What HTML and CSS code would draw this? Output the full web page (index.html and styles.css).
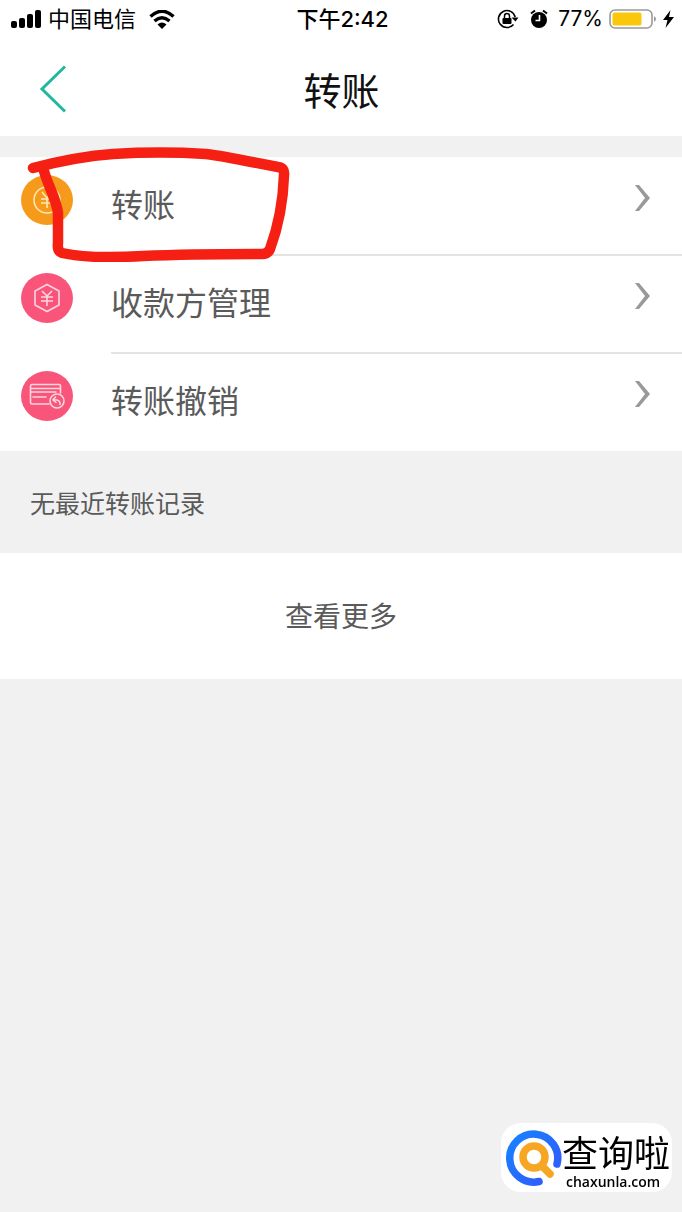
FILE: index.html
```html
<!DOCTYPE html>
<html lang="zh-CN">
<head>
  <meta charset="UTF-8" />
  <meta name="viewport" content="width=device-width, initial-scale=1.0" />
  <title>转账</title>
  <link rel="stylesheet" href="styles.css">
</head>
<body>

  <!-- 状态栏 -->
  <div class="status-bar">
    <div class="status-left">
      <svg width="31" height="19" viewBox="0 0 31 19">
        <rect x="0" y="11" width="6" height="7" rx="2" />
        <rect x="8" y="8" width="6" height="10" rx="2" />
        <rect x="16" y="4" width="6" height="14" rx="2" />
        <rect x="24" y="0" width="6" height="18" rx="2" />
      </svg>
      <span class="carrier">中国电信</span>
      <svg class="wifi" width="26" height="19" viewBox="0 0 26 19">
        <path d="M1.500 6.500Q13-4 24.500 6.500M5.500 11Q13 4.500 20.500 11" fill="none" stroke="#000" stroke-width="3.400" />
        <path d="M8.500 14.500Q13 10.500 17.500 14.500L13 19Z" />
      </svg>
    </div>
    <span class="clock">下午2:42</span>
    <div class="status-right">
      <svg width="22" height="20" viewBox="0 0 22 20">
        <path d="M16.500 15.500A8.500 8.500 0 1 1 18.200 8" fill="none" stroke="#000" stroke-width="1.600" />
        <path d="M14.500 8.500H21.500L18.500 12.500Z" />
        <rect x="5.500" y="9" width="9" height="6" rx="1" />
        <path d="M7.500 9V7a2.500 2.500 0 0 1 5 0V9" fill="none" stroke="#000" stroke-width="1.500" />
      </svg>
      <svg class="alarm" width="18" height="20" viewBox="0 0 18 20">
        <circle cx="9" cy="11" r="8" />
        <path d="M1 4.500L5 1.500M17 4.500L13 1.500" fill="none" stroke="#000" stroke-width="2" />
        <path d="M9.500 6V11.500H5.500" fill="none" stroke="#fff" stroke-width="1.600" />
      </svg>
      <span class="percent">77%</span>
      <svg width="48" height="22" viewBox="0 0 48 22">
        <rect x="1" y="2" width="42" height="18" rx="5" fill="#fff" stroke="#999" stroke-width="1.600" />
        <rect x="3.500" y="4.500" width="29" height="13" rx="2" fill="#fac70d" />
        <path d="M45 8Q49 11 45 14Z" fill="#999" />
      </svg>
      <svg width="11" height="18" viewBox="0 0 11 18">
        <path d="M7.500 0L0 10H4.500L2.500 18L11 7H6Z" />
      </svg>
    </div>
  </div>

  <header class="navbar">
    <button type="button" class="back-btn" aria-label="返回">
      <svg width="28" height="48" viewBox="0 0 28 48">
        <path d="M26 1.500L3 24L26 46.500" fill="none" stroke="#22b8a0" stroke-width="3" />
      </svg>
    </button>
    <h1>转账</h1>
  </header>

  <main>
    <nav class="menu">
      <a class="menu-item" href="#">
        <svg class="menu-icon" width="52" height="52" viewBox="0 0 52 52">
          <ellipse cx="26" cy="26" rx="26" ry="25" fill="#f59a1b" />
          <g fill="none" stroke="#ffe6b5" stroke-width="1.600">
            <circle cx="26" cy="26" r="13" />
            <path d="M21 18L26 24L31 18M20 25H32M20 29H32M26 24V34" />
          </g>
        </svg>
        <span class="menu-text">转账</span>
        <svg class="chevron" width="16" height="28" viewBox="0 0 16 28">
          <path d="M1 1H5L16 14L5 27H1L11 14Z" fill="#999" />
        </svg>
        <!-- 手绘红框 -->
        <svg class="mark" width="266" height="116" viewBox="0 0 266 116">
          <path d="M8 22C35 15 60 10 88 8C120 6 150 6 181 8C205 11 235 18 253 21Q260 22 259 29C258 60 252 84 245 103Q243 108 237 108C200 108 165 108 118 110C85 112 55 111 37 107Q32 105 33 97L33 67C31 52 23 40 19 25" fill="none" stroke="#f52013" stroke-width="10.500" stroke-linecap="round" stroke-linejoin="round" />
        </svg>
      </a>
      <a class="menu-item" href="#">
        <svg class="menu-icon" width="52" height="52" viewBox="0 0 52 52">
          <ellipse cx="26" cy="26" rx="26" ry="25" fill="#f9557a" />
          <g fill="none" stroke="#ffd5df" stroke-width="1.600" stroke-linejoin="round">
            <path d="M26 12.500L38 19V33L26 39.500L14 33V19Z" />
            <path d="M21 19L26 24L31 19M20 25H32M20 29H32M26 24V34" />
          </g>
        </svg>
        <span class="menu-text">收款方管理</span>
        <svg class="chevron" width="16" height="28" viewBox="0 0 16 28">
          <path d="M1 1H5L16 14L5 27H1L11 14Z" fill="#999" />
        </svg>
      </a>
      <a class="menu-item" href="#">
        <svg class="menu-icon" width="52" height="52" viewBox="0 0 52 52">
          <ellipse cx="26" cy="26" rx="26" ry="25" fill="#f9557a" />
          <g fill="none" stroke="#ffd5df" stroke-width="1.600" stroke-linecap="round">
            <path d="M28 34H11Q9.500 34 9.500 32.500V16Q9.500 14.500 11 14.500H38Q39.500 14.500 39.500 16V23M10 18.500H39M10 22H35M12 27H25" />
            <circle cx="36" cy="31" r="7" />
            <path d="M34.500 27L32 30L35 32.500M32.500 30H36Q39.500 31 39 34.500" />
          </g>
        </svg>
        <span class="menu-text">转账撤销</span>
        <svg class="chevron" width="16" height="28" viewBox="0 0 16 28">
          <path d="M1 1H5L16 14L5 27H1L11 14Z" fill="#999" />
        </svg>
      </a>
    </nav>

    <h2 class="section-title">无最近转账记录</h2>
    <button type="button" class="more-btn">查看更多</button>
  </main>

  <!-- 站点水印 -->
  <div class="watermark">
    <svg width="56" height="56" viewBox="0 0 56 56">
      <defs>
        <linearGradient id="ring" x1="0" y1="0" x2="1" y2="1">
          <stop offset="0" stop-color="#1683ff" />
          <stop offset="1" stop-color="#3557fb" />
        </linearGradient>
      </defs>
      <path d="M33 51.500A24 24 0 1 1 51 34" fill="none" stroke="url(#ring)" stroke-width="7.500" stroke-linecap="round" />
      <circle cx="28" cy="27" r="11" fill="none" stroke="#f7a623" stroke-width="7.500" />
      <path d="M36 36L44 44" stroke="#f7a623" stroke-width="7.500" stroke-linecap="round" />
    </svg>
    <div class="watermark-text">
      <span class="watermark-name">查询啦</span>
      <span class="watermark-site">chaxunla.com</span>
    </div>
  </div>

</body>
</html>
```
FILE: styles.css
```css
* {
  box-sizing: border-box;
}
body {
  margin: 0;
  min-height: 100vh;
  background: #f1f1f1;
  color: #5a5a5a;
  font-family: "Noto Sans CJK SC", sans-serif;
}
svg {
  display: block;
  flex: none;
}
button {
  border: none;
  background: none;
  font-family: inherit;
  color: inherit;
  cursor: pointer;
}

.status-bar {
  display: grid;
  grid-template-columns: 1fr auto 1fr;
  align-items: center;
  height: 38px;
  padding: 0 8px 0 11px;
  background: #fff;
  color: #000;
  font-family: Inter, "Noto Sans CJK SC", sans-serif;
  font-size: 22px;
  line-height: 30px;
}
.status-left,
.status-right {
  display: flex;
  align-items: center;
}
.status-right {
  justify-content: flex-end;
}
.carrier {
  margin-left: 6px;
}
.wifi {
  margin-left: 13px;
}
.clock {
  font-weight: 500;
}
.alarm {
  margin: 0 10px 0 11px;
}
.percent {
  margin-right: 6px;
  font-size: 21px;
}
.status-right svg:last-child {
  margin-left: 6px;
}

.navbar {
  display: grid;
  grid-template-columns: 1fr auto 1fr;
  align-items: center;
  height: 98px;
  padding: 4px 38px 0 39px;
  background: #fff;
}
.back-btn {
  justify-self: start;
  padding: 0;
}
.navbar h1 {
  margin: 0;
  color: #111;
  font-size: 38px;
  font-weight: 400;
  line-height: 56px;
}

.menu {
  margin-top: 21px;
  background: #fff;
}
.menu-item {
  position: relative;
  display: flex;
  align-items: center;
  height: 98px;
  padding: 0 32px 0 21px;
  color: #5a5a5a;
  text-decoration: none;
}
/* 分隔线从文字处开始 */
.menu-item + .menu-item::before {
  content: "";
  position: absolute;
  top: -1px;
  left: 111px;
  right: 0;
  height: 2px;
  background: #e4e4e4;
}
.menu-icon {
  margin: 0 38px 12px 0;
}
.menu-text {
  flex: 1;
  margin-bottom: 6px;
  font-size: 32px;
  line-height: 48px;
}
.chevron {
  margin-bottom: 16px;
}
.mark {
  position: absolute;
  z-index: 1;
  top: -11px;
  left: 25px;
}

.section-title {
  margin: 0;
  padding: 32px 30px;
  font-size: 25px;
  font-weight: 400;
  line-height: 38px;
}
.more-btn {
  display: block;
  width: 100%;
  padding: 42px 0 44px;
  background: #fff;
  font-size: 28px;
  line-height: 40px;
}

.watermark {
  position: fixed;
  right: 10px;
  bottom: 20px;
  display: flex;
  align-items: center;
  padding: 6px 2px 1px 5px;
  border-radius: 20px;
  background: #fff;
  color: #000;
}
.watermark svg {
  margin-bottom: 4px;
}
.watermark-text {
  display: flex;
  flex-direction: column;
}
.watermark-name {
  font-size: 36px;
  line-height: 44px;
}
.watermark-site {
  padding-left: 4px;
  font-family: "Open Sans", sans-serif;
  font-size: 14px;
  font-weight: 600;
  line-height: 18px;
}
```
